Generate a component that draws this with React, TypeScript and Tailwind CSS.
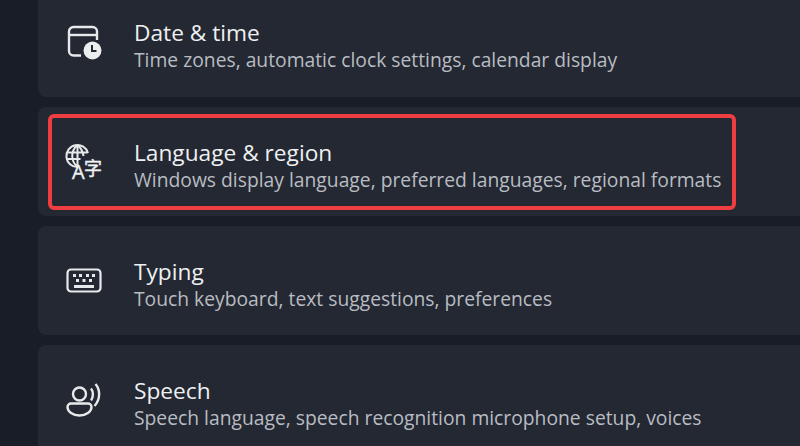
const DateIcon = () => (
  <svg width="36" height="36" viewBox="0 0 36 36" fill="none" stroke="#e8e9eb" strokeWidth="2.400">
    <path d="M15 31.500H7.500a4.500 4.500 0 0 1-4.500-4.500V7.500A4.500 4.500 0 0 1 7.500 3h19A4.500 4.500 0 0 1 31 7.500V16" />
    <path d="M3 11h28" />
    <circle cx="26.500" cy="26.500" r="9" fill="#eceded" stroke="none" />
    <path d="M26 21v6h4.500" stroke="#232832" strokeWidth="2" />
  </svg>
);

const LanguageIcon = () => (
  <svg width="38" height="36" viewBox="0 0 38 36" fill="none" stroke="#e8e9eb" strokeWidth="2" className="overflow-visible">
    <path d="M11.500 23a11 11 0 1 1 10.500-14" />
    <path d="M1.500 8.500h20M1.500 15h13M11.500 1v22M11.500 1c-7 6-7 16 0 22M11.500 1c4 3.500 5.500 7 6 11" />
    <text x="6" y="35" fill="#f0f1f2" stroke="#f0f1f2" strokeWidth="0.400" fontSize="20" fontFamily="'Open Sans', sans-serif">A</text>
    <text x="18" y="31" fill="#f0f1f2" stroke="#f0f1f2" strokeWidth="0.400" fontSize="18" fontFamily="'Noto Sans CJK SC', sans-serif">字</text>
  </svg>
);

const KeyboardIcon = () => (
  <svg width="36" height="25" viewBox="0 0 36 25" fill="none" stroke="#e8e9eb" strokeWidth="2.200">
    <rect x="1.500" y="1.500" width="33" height="22" rx="3.500" />
    <path d="M8 18.500h20" strokeWidth="3" />
    <g fill="#e8e9eb" stroke="none">
      <rect x="7" y="6" width="3" height="3" />
      <rect x="13" y="6" width="3" height="3" />
      <rect x="20" y="6" width="3" height="3" />
      <rect x="26" y="6" width="3" height="3" />
      <rect x="10" y="11" width="3" height="3" />
      <rect x="16.500" y="11" width="3" height="3" />
      <rect x="23" y="11" width="3" height="3" />
    </g>
  </svg>
);

const SpeechIcon = () => (
  <svg width="36" height="36" viewBox="0 0 36 36" fill="none" stroke="#e8e9eb" strokeWidth="2.400">
    <circle cx="13.500" cy="12" r="6.500" />
    <path d="M5 21.500h17a3.500 3.500 0 0 1 3.500 3.500c0 4.500-5.500 8.500-12 8.500S1.500 29.500 1.500 25A3.500 3.500 0 0 1 5 21.500Z" />
    <path d="M25 6.500c2.500 3 2.500 9 0 12" />
    <path d="M29.500 2c5 6 5 15.500-1 22" />
  </svg>
);

const rows = [
  { title: "Date & time", text: "Time zones, automatic clock settings, calendar display", icon: <DateIcon />, h: "h-[110px] -mt-[13px]" },
  { title: "Language & region", text: "Windows display language, preferred languages, regional formats", icon: <LanguageIcon />, h: "h-[109px]", active: true },
  { title: "Typing", text: "Touch keyboard, text suggestions, preferences", icon: <KeyboardIcon />, h: "h-[109px]" },
  { title: "Speech", text: "Speech language, speech recognition microphone setup, voices", icon: <SpeechIcon />, h: "h-[109px]" },
];

export default function App() {
  return (
    <div className="w-[800px] h-[446px] overflow-hidden bg-[#181d28] pl-[38px] font-['Open_Sans',sans-serif]">
      <div className="flex flex-col gap-2.5">
        {rows.map((row) => (
          <div key={row.title} className={`relative flex items-center rounded-l-lg bg-[#232832] pl-7 pt-2 shrink-0 ${row.h}`}>
            {row.active && (
              <div className="absolute left-[10px] top-[7px] w-[688px] h-[96px] rounded-[6px] border-4 border-[#ef3e42]" />
            )}
            <div className="w-[68px] mb-2 flex items-center">{row.icon}</div>
            <div>
              <p className="text-[22.700px] leading-[28px] text-[#eff0f1]">{row.title}</p>
              <p className="text-[19.300px] leading-[26px] text-[#b9bcc2]">{row.text}</p>
            </div>
          </div>
        ))}
      </div>
    </div>
  );
}
